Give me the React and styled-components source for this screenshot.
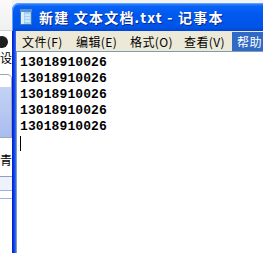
import styled, { createGlobalStyle } from "styled-components";

const GlobalStyle = createGlobalStyle`
  html, body {
    margin: 0;
    padding: 0;
    background: #ffffff;
    overflow: hidden;
  }
  #root {
    width: 263px;
    height: 253px;
  }
`;

const Page = styled.div`
  display: flex;
  width: 263px;
  height: 253px;
  overflow: hidden;
  background: #f3f3f3;
`;

const Strip = styled.div`
  width: 12px;
  flex-shrink: 0;
  display: flex;
  flex-direction: column;
  overflow: hidden;
  background: #ffffff;
  font-family: "Noto Sans CJK SC", sans-serif;
  font-size: 12px;
  color: #000;
`;

const StripTop = styled.div`
  height: 30px;
  background: linear-gradient(#fafafa, #f0f0f0);
  border-bottom: 1px solid #d0d0d0;
`;

const InfoDot = styled.div`
  width: 12px;
  height: 12px;
  margin: 5px 0 0 -4px;
  border-radius: 50%;
  background: #1e1e1e;
`;

const StripText = styled.div`
  height: 16px;
  line-height: 16px;
  margin-top: ${(p) => p.$top || 0}px;
  white-space: nowrap;
`;

const Panel = styled.div`
  margin-top: 8px;
  height: 62px;
  border: 1px solid #9aa6bd;
  border-left: none;
  border-radius: 0 5px 0 0;
  display: flex;
  flex-direction: column;
`;

const PanelFill = styled.div`
  margin-top: 12px;
  flex: 1;
  background: linear-gradient(#c4d2f5, #a9bdee);
`;

const RuleBox = styled.div`
  margin-top: 8px;
  height: 13px;
  border-top: 1px solid #8aa0cf;
  border-bottom: 1px solid #9bb2e2;
  background: #eef2fb;
`;

const Rule = styled.div`
  margin-top: 7px;
  border-top: 1px solid #9bb2e2;
`;

const Window = styled.div`
  flex: 1;
  margin-top: 3px;
  display: flex;
  flex-direction: column;
  min-width: 0;
`;

const TitleBar = styled.div`
  height: 28px;
  flex-shrink: 0;
  display: flex;
  align-items: center;
  gap: 6px;
  padding-left: 7px;
  border-radius: 7px 0 0 0;
  background: linear-gradient(
    #3d8dfe 0%,
    #0a63f6 12%,
    #0058ee 40%,
    #0055e8 85%,
    #0046d4 100%
  );
  box-shadow: inset 1px 1px 0 #5ea2ff;
`;

const TitleText = styled.span`
  font-family: "Noto Sans CJK SC", sans-serif;
  font-weight: bold;
  font-size: 14px;
  letter-spacing: 1.2px;
  color: #ffffff;
  white-space: nowrap;
  text-shadow: 1px 1px 0 #0b2a8c;
`;

const Body = styled.div`
  flex: 1;
  display: flex;
  min-height: 0;
`;

const Frame = styled.div`
  width: 4px;
  flex-shrink: 0;
  background: linear-gradient(to right, #0019cf, #0a3fe6 50%, #3c73f0);
`;

const Client = styled.div`
  flex: 1;
  display: flex;
  flex-direction: column;
  min-width: 0;
`;

const MenuBar = styled.div`
  height: 20px;
  flex-shrink: 0;
  display: flex;
  background: #ece9d8;
  overflow: hidden;
  font-family: "Noto Sans CJK SC", sans-serif;
  font-size: 12px;
`;

const MenuItem = styled.div`
  width: 54px;
  flex-shrink: 0;
  box-sizing: border-box;
  padding-left: ${(p) => (p.$active ? 5 : 6)}px;
  margin-top: 1px;
  display: flex;
  align-items: center;
  white-space: nowrap;
  letter-spacing: 0.4px;
  color: ${(p) => (p.$active ? "#ffffff" : "#000000")};
  background: ${(p) => (p.$active ? "#316ac5" : "transparent")};
`;

const Editor = styled.div`
  flex: 1;
  background: #ffffff;
  border-top: 1px solid #7f9db9;
  border-left: 1px solid #7f9db9;
  padding: 3px 0 0 3px;
  font-family: "Liberation Mono", monospace;
  font-weight: bold;
  font-size: 13px;
  letter-spacing: 0.1px;
  line-height: 16px;
  color: #000000;
`;

const Line = styled.div`
  height: 16px;
  white-space: nowrap;
`;

const Caret = styled.div`
  width: 1px;
  height: 15px;
  margin-top: 1px;
  background: #000000;
`;

const NotepadIcon = () => (
  <svg width="14" height="16" viewBox="0 0 14 16">
    <rect x="1.5" y="1.5" width="11" height="14" fill="#9fd0f5" stroke="#3b74b8" />
    <rect x="2" y="2" width="3" height="13" fill="#d8efff" />
    <rect x="1" y="0" width="12" height="3" fill="#5b8fd0" />
    <line x1="6" y1="6" x2="11" y2="6" stroke="#ffffff" />
    <line x1="6" y1="9" x2="11" y2="9" stroke="#ffffff" />
    <line x1="6" y1="12" x2="11" y2="12" stroke="#ffffff" />
  </svg>
);

const menus = ["文件(F)", "编辑(E)", "格式(O)", "查看(V)", "帮助"];
const lines = Array(5).fill("13018910026");

export default function App() {
  return (
    <>
      <GlobalStyle />
      <Page>
        <Strip>
          <StripTop />
          <InfoDot />
          <StripText $top={2}>设</StripText>
          <Panel>
            <PanelFill />
          </Panel>
          <StripText $top={14}>青</StripText>
          <RuleBox />
          <Rule />
        </Strip>
        <Window>
          <TitleBar>
            <NotepadIcon />
            <TitleText>新建 文本文档.txt - 记事本</TitleText>
          </TitleBar>
          <Body>
            <Frame />
            <Client>
              <MenuBar>
                {menus.map((m, i) => (
                  <MenuItem key={m} $active={i === menus.length - 1}>
                    {m}
                  </MenuItem>
                ))}
              </MenuBar>
              <Editor>
                {lines.map((l, i) => (
                  <Line key={i}>{l}</Line>
                ))}
                <Caret />
              </Editor>
            </Client>
          </Body>
        </Window>
      </Page>
    </>
  );
}
